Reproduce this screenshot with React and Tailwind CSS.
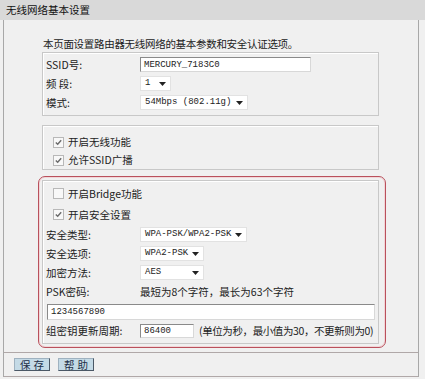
import React from 'react';

const cjk = { fontFamily: '"Noto Sans CJK SC", "Liberation Sans", sans-serif' };
const mono = { fontFamily: '"Liberation Mono", "Noto Sans CJK SC", monospace' };

// ── small pieces ─────────────────────────────────────────────
const Arrow = () => (
  <svg width="7" height="4" viewBox="0 0 7 4" className="flex-shrink-0">
    <path d="M0 0 H7 L3.5 4 Z" fill="#222" />
  </svg>
);

const Select = ({ value, width }) => (
  <div
    className="h-[15px] flex items-center justify-between gap-[4px] bg-white border border-[#e2e2e2] pl-[4px] pr-[4px] flex-shrink-0"
    style={{ width }}
  >
    <span className="text-[9px] leading-[13px] text-[#222] whitespace-nowrap" style={mono}>{value}</span>
    <Arrow />
  </div>
);

const TextInput = ({ value, className }) => (
  <div
    className={`bg-white border border-[#8a8a8a] border-r-[#d8d8d8] border-b-[#d8d8d8] flex items-center pl-[3px] flex-shrink-0 ${className}`}
  >
    <span className="text-[9px] leading-[12px] text-[#222] whitespace-nowrap" style={mono}>{value}</span>
  </div>
);

const Check = ({ checked, label }) => (
  <div className="flex items-center gap-[4px]">
    <span className="w-[11px] h-[11px] border border-[#b8b8b8] bg-[#f8f8f8] flex items-center justify-center">
      {checked && (
        <svg width="7" height="7" viewBox="0 0 7 7">
          <path d="M0.8 3.4 L2.7 5.3 L6.2 1.2" fill="none" stroke="#6a6a6a" strokeWidth="1.4" />
        </svg>
      )}
    </span>
    <span className="text-[10.5px] leading-[14px] text-[#222] whitespace-nowrap" style={cjk}>{label}</span>
  </div>
);

const Row = ({ label, h = 'h-[19px]', children }) => (
  <div className={`flex items-center ${h}`}>
    <span className="w-[94px] text-[10.5px] leading-[14px] text-[#222] flex-shrink-0 whitespace-nowrap" style={cjk}>{label}</span>
    {children}
  </div>
);

const Btn = ({ children }) => (
  <button
    className="w-[36px] h-[13px] bg-[#c4dae6] border border-[#4b5866] border-t-[#9fb2c0] border-l-[#9fb2c0] flex items-center justify-center text-[10.5px] leading-[11px] text-[#1d2f47] tracking-[3px] pl-[3px]"
    style={cjk}
  >
    {children}
  </button>
);

export default function App() {
  return (
    <div className="w-[425px] h-[379px] bg-[#f0f0f0] overflow-hidden" style={cjk}>
      {/* title bar */}
      <div className="h-[20px] bg-[#d9d9d9] flex items-center pl-[6px]">
        <span className="text-[10.5px] leading-[14px] text-[#111]">无线网络基本设置</span>
      </div>

      {/* panel */}
      <div className="ml-[3px] w-[416px] border-l border-r border-[#a8a8a8]">
        <div className="pt-[9px] pl-[39px] h-[32px]">
          <span className="text-[10.5px] leading-[14px] text-[#222] tracking-[-0.3px]">本页面设置路由器无线网络的基本参数和安全认证选项。</span>
        </div>

        {/* basic params */}
        <div className="ml-[38px] w-[337px] border border-[#c8c8c8] shadow-[inset_1px_1px_0_#ffffff] pl-[3px] pt-[2px] pb-[3px]">
          <Row label="SSID号:">
            <TextInput value="MERCURY_7183C0" className="w-[171px] h-[15px]" />
          </Row>
          <Row label="频 段:">
            <Select value="1" width={31} />
          </Row>
          <Row label="模式:">
            <Select value="54Mbps (802.11g)" width={108} />
          </Row>
        </div>

        {/* wireless switches */}
        <div className="mt-[9px] ml-[38px] w-[337px] h-[45px] border border-[#c8c8c8] shadow-[inset_1px_1px_0_#ffffff] pl-[10px] pt-[7px]">
          <div className="h-[18px] flex items-center">
            <Check checked label="开启无线功能" />
          </div>
          <div className="h-[18px] flex items-center">
            <Check checked label="允许SSID广播" />
          </div>
        </div>

        {/* security (highlighted) */}
        <div className="mt-[6px] ml-[34px] w-[348px] border border-[#b9505c] rounded-[7px] shadow-[inset_0_0_0_1px_#f1d6d8] pl-[3px] pr-[6px] pt-[3px] pb-[3px]">
          <div className="border border-[#c8c8c8] shadow-[inset_1px_1px_0_#ffffff] pl-[3px] pt-[2px] pb-[1px]">
            <div className="h-[21px] flex items-center pl-[7px]">
              <Check label="开启Bridge功能" />
            </div>
            <div className="h-[21px] flex items-center pl-[7px]">
              <Check checked label="开启安全设置" />
            </div>
            <Row label="安全类型:">
              <Select value="WPA-PSK/WPA2-PSK" width={107} />
            </Row>
            <Row label="安全选项:">
              <Select value="WPA2-PSK" width={64} />
            </Row>
            <Row label="加密方法:">
              <Select value="AES" width={64} />
            </Row>
            <Row label="PSK密码:" h="h-[20px]">
              <span className="text-[10.5px] leading-[14px] text-[#222] whitespace-nowrap">最短为8个字符，最长为63个字符</span>
            </Row>
            <div className="pt-[2px] pl-[1px]">
              <TextInput value="1234567890" className="w-[328px] h-[16px]" />
            </div>
            <Row label="组密钥更新周期:" h="h-[22px]">
              <TextInput value="86400" className="w-[54px] h-[14px]" />
              <span className="ml-[5px] text-[10.5px] leading-[14px] text-[#222] whitespace-nowrap tracking-[-0.4px]">(单位为秒，最小值为30，不更新则为0)</span>
            </Row>
          </div>
        </div>

        {/* buttons */}
        <div className="mt-[4px] border-t border-b border-[#b0a8a8] h-[25px] flex items-center gap-[8px] pl-[10px]">
          <Btn>保存</Btn>
          <Btn>帮助</Btn>
        </div>
      </div>
    </div>
  );
}
